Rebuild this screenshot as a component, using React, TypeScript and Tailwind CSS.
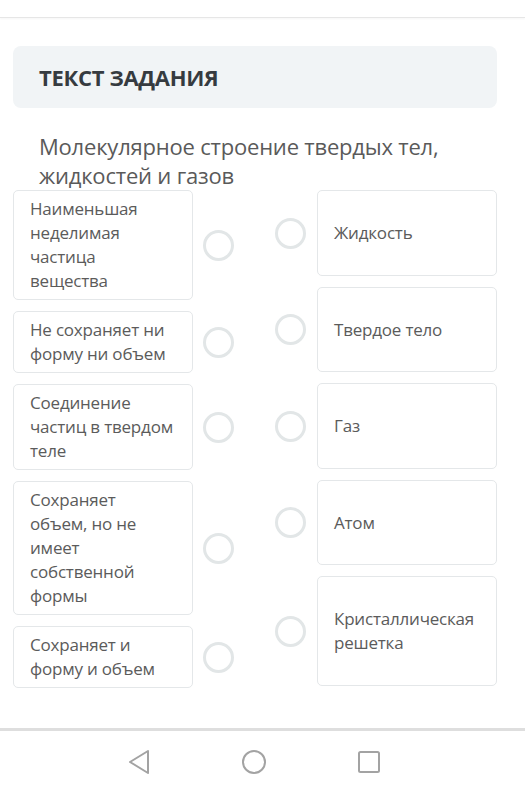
import React from 'react';

const leftItems: { lines: string[] }[] = [
  { lines: ['Наименьшая', 'неделимая', 'частица', 'вещества'] },
  { lines: ['Не сохраняет ни', 'форму ни объем'] },
  { lines: ['Соединение', 'частиц в твердом', 'теле'] },
  { lines: ['Сохраняет', 'объем, но не', 'имеет', 'собственной', 'формы'] },
  { lines: ['Сохраняет и', 'форму и объем'] },
];

const rightItems: { lines: string[]; h: string }[] = [
  { lines: ['Жидкость'], h: 'h-[86px]' },
  { lines: ['Твердое тело'], h: 'h-[85px]' },
  { lines: ['Газ'], h: 'h-[86px]' },
  { lines: ['Атом'], h: 'h-[85px]' },
  { lines: ['Кристаллическая', 'решетка'], h: 'h-[110px]' },
];

const Radio = () => (
  <div className="w-[31px] h-[31px] rounded-full border-[3px] border-[#e2e6e7] shrink-0" />
);

const Lines = ({ lines }: { lines: string[] }) => (
  <span className="whitespace-nowrap">
    {lines.map((l, i) => (
      <React.Fragment key={i}>
        {i > 0 && <br />}
        {l}
      </React.Fragment>
    ))}
  </span>
);

export default function App() {
  return (
    <div
      className="w-[525px] h-[794px] bg-white flex flex-col overflow-hidden"
      style={{ fontFamily: '"Open Sans", "Noto Sans", sans-serif' }}
    >
      {/* top strip */}
      <div className="h-[18px] border-b border-[#e6e6e6] shadow-[0_1px_2px_rgba(0,0,0,0.04)]" />

      <div className="flex-1 pl-[13px] pr-[28px] pt-[28px] flex flex-col">
        {/* heading box */}
        <div className="h-[62px] rounded-lg bg-[#f1f4f6] pl-[26px] flex items-center">
          <span className="text-[22px] font-bold text-[#363b40] tracking-[-0.3px]">ТЕКСТ ЗАДАНИЯ</span>
        </div>

        {/* question */}
        <div className="mt-[24px] pl-[26px] text-[22px] leading-[29px] text-[#5a5a5a] tracking-[-0.2px]">
          Молекулярное строение твердых тел,
          <br />
          жидкостей и газов
        </div>

        {/* matching columns */}
        <div className="flex justify-between">
          <div className="flex flex-col gap-[11px]">
            {leftItems.map((item, i) => (
              <div key={i} className="flex items-center gap-[10px]">
                <div className="w-[180px] rounded-[5px] border border-[#e4e7e9] px-4 py-[6px] text-[17px] leading-6 text-[#5b5b5b] tracking-[-0.2px]">
                  <Lines lines={item.lines} />
                </div>
                <Radio />
              </div>
            ))}
          </div>

          <div className="flex flex-col gap-[11px]">
            {rightItems.map((item, i) => (
              <div key={i} className="flex items-center gap-[11px]">
                <Radio />
                <div
                  className={`w-[180px] ${item.h} rounded-[5px] border border-[#e4e7e9] px-4 flex items-center text-[17px] leading-6 text-[#5b5b5b] tracking-[-0.2px]`}
                >
                  <Lines lines={item.lines} />
                </div>
              </div>
            ))}
          </div>
        </div>
      </div>

      {/* android nav bar */}
      <div className="h-[66px] border-t-[3px] border-[#dedede] bg-white flex items-center pl-[128px] gap-[92px] pb-[2px]">
        <svg width="22" height="26" viewBox="0 0 22 26" className="shrink-0">
          <path d="M20 2 L2 13 L20 24 Z" fill="none" stroke="#a3a3a3" strokeWidth="2" strokeLinejoin="round" />
        </svg>
        <svg width="24" height="24" viewBox="0 0 24 24" className="shrink-0">
          <circle cx="12" cy="12" r="11" fill="none" stroke="#a3a3a3" strokeWidth="2" />
        </svg>
        <svg width="22" height="22" viewBox="0 0 22 22" className="shrink-0">
          <rect x="1" y="1" width="20" height="20" rx="1.5" fill="none" stroke="#a3a3a3" strokeWidth="2" />
        </svg>
      </div>
    </div>
  );
}
